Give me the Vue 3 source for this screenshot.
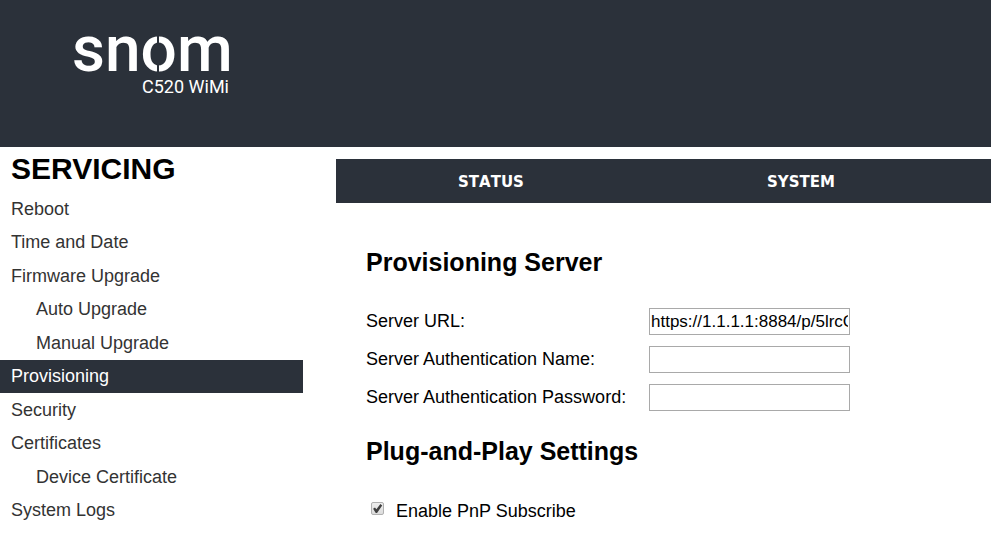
<script setup>
import { ref } from 'vue'

const menu = [
  { label: 'Reboot' },
  { label: 'Time and Date' },
  { label: 'Firmware Upgrade' },
  { label: 'Auto Upgrade', nested: true },
  { label: 'Manual Upgrade', nested: true },
  { label: 'Provisioning', active: true },
  { label: 'Security' },
  { label: 'Certificates' },
  { label: 'Device Certificate', nested: true },
  { label: 'System Logs' },
]
const tabs = ['STATUS', 'SYSTEM']

const serverUrl = ref('https://1.1.1.1:8884/p/5lrcC')
const authName = ref('')
const authPassword = ref('')
const pnpSubscribe = ref(true)
</script>

<template>
  <header class="banner">
    <div class="brand">
      <svg class="logo" width="160" height="42" viewBox="0 0 160 42">
        <text class="wordmark" x="0" y="39">snom</text>
        <path d="M86 0v15M86 31v11" stroke="#2b313a" stroke-width="2" />
      </svg>
      <span class="model">C520 WiMi</span>
    </div>
  </header>
  <div class="page">
    <aside class="sidebar">
      <h1>SERVICING</h1>
      <nav class="menu">
        <a
          v-for="item in menu"
          :key="item.label"
          href="#"
          :class="{ nested: item.nested, active: item.active }"
        >{{ item.label }}</a>
      </nav>
    </aside>
    <main class="main">
      <nav class="tabs">
        <a v-for="tab in tabs" :key="tab" href="#">{{ tab }}</a>
      </nav>
      <form class="settings" @submit.prevent>
        <h2>Provisioning Server</h2>
        <div class="fields">
          <label for="server-url">Server URL:</label>
          <input id="server-url" v-model="serverUrl" type="text" />
          <label for="auth-name">Server Authentication Name:</label>
          <input id="auth-name" v-model="authName" type="text" />
          <label for="auth-password">Server Authentication Password:</label>
          <input id="auth-password" v-model="authPassword" type="password" />
        </div>
        <h2>Plug-and-Play Settings</h2>
        <div class="option">
          <input id="pnp" v-model="pnpSubscribe" type="checkbox" />
          <label for="pnp">Enable PnP Subscribe</label>
        </div>
      </form>
    </main>
  </div>
</template>

<style>
body {
  background: #fff;
  font-family: "Liberation Sans", Arial, sans-serif;
}
</style>

<style scoped>
.banner {
  display: flex;
  padding: 32px 72px 48px;
  background: #2b313a;
}
.brand {
  display: flex;
  flex-direction: column;
  align-items: flex-end;
  color: #fff;
}
.logo {
  display: block;
  overflow: visible;
}
.wordmark {
  fill: #fff;
  font-family: Roboto, sans-serif;
  font-size: 64px;
  font-weight: 500;
}
.model {
  padding: 1px 3px 0 0;
  font-family: Roboto, sans-serif;
  font-size: 18px;
  line-height: 24px;
}
.page {
  display: flex;
  gap: 33px;
}
.sidebar {
  flex: 0 0 303px;
}
h1 {
  margin: 5px 0 6px;
  padding-left: 11px;
  font-size: 30px;
  line-height: 34px;
}
.menu {
  display: grid;
  grid-auto-rows: 1fr;
  min-height: 335px;
}
.menu a {
  display: flex;
  align-items: center;
  padding-left: 11px;
  color: #333;
  font-size: 18px;
  line-height: 20px;
  text-decoration: none;
}
.menu .nested {
  padding-left: 36px;
}
.menu .active {
  background: #2b313a;
  color: #fff;
}
.main {
  flex: 1;
  min-width: 0;
  padding-top: 12px;
}
.tabs {
  display: flex;
  padding-top: 2px;
  background: #2b313a;
}
.tabs a {
  flex: 0 1 310px;
  color: #fff;
  font: bold 15px/42px "DejaVu Sans", Verdana, sans-serif;
  font-kerning: none;
  text-align: center;
  text-decoration: none;
}
.settings {
  padding: 44px 30px 12px;
  font-size: 18px;
}
h2 {
  margin: 0;
  font-size: 25px;
  line-height: 30px;
}
.fields {
  display: grid;
  grid-template-columns: 283px 201px;
  row-gap: 11px;
  margin: 31px 0 25px;
  line-height: 26px;
}
.fields input {
  box-sizing: border-box;
  width: 100%;
  height: 27px;
  margin: 0;
  padding: 1px;
  border: 1px solid #a9a9a9;
  border-radius: 0;
  background: #fff;
  color: #000;
  font: 17px "Liberation Sans", Arial, sans-serif;
}
.option {
  display: flex;
  gap: 12px;
  padding: 34px 0 0 5px;
  line-height: 22px;
}
.option input {
  appearance: none;
  box-sizing: border-box;
  width: 13px;
  height: 13px;
  margin: 2px 0;
  border: 1px solid #b0b0b0;
  border-radius: 2px;
  background: linear-gradient(#eee, #dcdcdc);
}
.option input:checked::after {
  content: "";
  display: block;
  height: 11px;
  background: #404040;
  clip-path: polygon(10% 53%, 27% 40%, 40% 57%, 76% 8%, 93% 22%, 46% 91%, 34% 91%);
}
</style>
